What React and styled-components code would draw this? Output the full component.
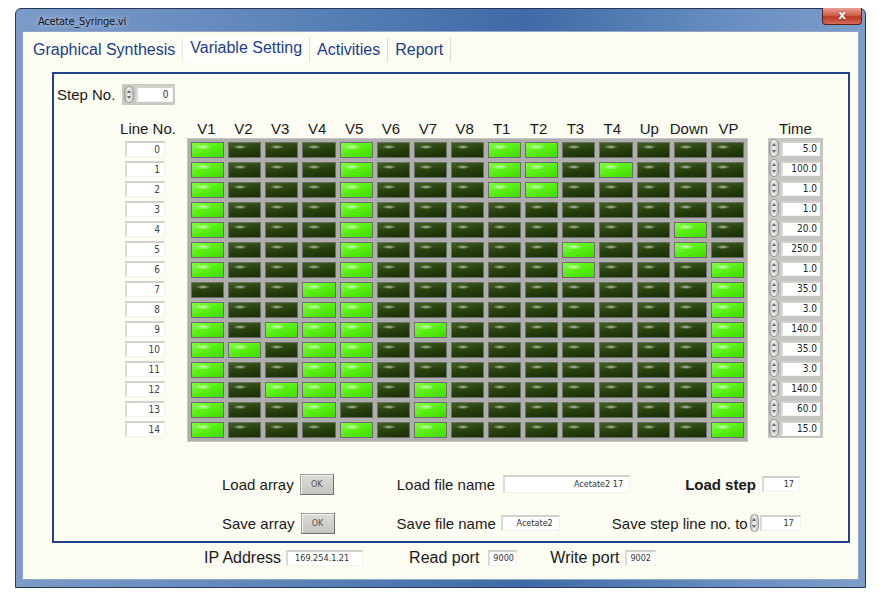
import React from "react";
import styled, { createGlobalStyle, css } from "styled-components";

const GlobalStyle = createGlobalStyle`
  html, body {
    margin: 0;
    padding: 0;
    background: #ffffff;
  }
  body {
    font-family: "Liberation Sans", Arial, sans-serif;
    color: #1a1a1a;
  }
`;

const Page = styled.div`
  width: 882px;
  height: 596px;
  padding: 8px 0 0 15px;
  box-sizing: border-box;
`;

const Window = styled.div`
  width: 851px;
  height: 580px;
  box-sizing: border-box;
  display: flex;
  flex-direction: column;
  border: 1px solid #27395a;
  border-radius: 6px 6px 0 0;
  background: linear-gradient(
    90deg,
    #7b9bc8 0%,
    #6a8dc0 20%,
    #4e78b0 45%,
    #3f6aa5 60%,
    #6a8fc2 85%,
    #7d9dc9 100%
  );
`;

const TitleBar = styled.div`
  height: 22px;
  flex: 0 0 22px;
  display: flex;
  align-items: flex-start;
  justify-content: space-between;
  padding-left: 22px;
  padding-right: 3px;
`;

const Title = styled.div`
  font-family: "DejaVu Sans", sans-serif;
  font-size: 10px;
  color: #151515;
  margin-top: 7px;
  letter-spacing: -0.3px;
  text-shadow: 0 0 6px rgba(255, 255, 255, 0.8);
`;

const CloseButton = styled.div`
  width: 40px;
  height: 17px;
  margin-top: -1px;
  box-sizing: border-box;
  border: 1px solid #5b2018;
  border-top: none;
  border-radius: 0 0 4px 4px;
  background: linear-gradient(180deg, #e7a094 0%, #d2614e 45%, #b83a26 55%, #d66a55 100%);
  color: #fff;
  font-family: "DejaVu Sans", sans-serif;
  font-weight: bold;
  font-size: 12px;
  line-height: 15px;
  text-align: center;
  text-shadow: 0 0 2px #5b1a10;
`;

const Client = styled.div`
  flex: 1;
  margin: 0 6px 7px 6px;
  background: #fcfcf2;
  border: 1px solid #8fa6c8;
  box-sizing: border-box;
  display: flex;
  flex-direction: column;
`;

const TabBar = styled.div`
  display: flex;
  height: 24px;
  margin-top: 6px;
  padding-left: 3px;
`;

const Tab = styled.div`
  padding: 0 7px;
  border-right: 1px solid #dcdcd0;
  font-size: 16px;
  color: #1d3d8f;
  line-height: 24px;
  ${(p) =>
    p.$active &&
    css`
      line-height: 20px;
      background: #fefefa;
      border-left: 1px solid #e6e6dc;
      margin-left: -1px;
    `}
`;

const Panel = styled.div`
  width: 798px;
  height: 471px;
  margin: 10px 0 0 29px;
  box-sizing: border-box;
  border: 2px solid #23408f;
  display: flex;
  flex-direction: column;
  padding-left: 3px;
`;

const StepRow = styled.div`
  display: flex;
  align-items: center;
  height: 22px;
  margin-top: 9px;
`;

const Label = styled.span`
  font-size: ${(p) => p.$size || 15}px;
  font-weight: ${(p) => (p.$bold ? "bold" : "normal")};
  color: #1a1a1a;
  white-space: nowrap;
  margin-left: ${(p) => p.$ml || 0}px;
`;

const NumControl = styled.div`
  display: flex;
  align-items: center;
  gap: 2px;
  background: #c9c9c6;
  padding: 2px;
  margin-left: ${(p) => p.$ml || 0}px;
  box-sizing: border-box;
`;

const Spin = styled.div`
  position: relative;
  width: ${(p) => p.$w || 10}px;
  height: ${(p) => p.$h || 17}px;
  margin-left: ${(p) => p.$ml || 0}px;
  box-sizing: border-box;
  border: 1px solid #9a9a98;
  border-radius: 5px;
  background: linear-gradient(90deg, #b8b8b6 0%, #f2f2f0 45%, #c4c4c2 100%);

  &::before,
  &::after {
    content: "";
    position: absolute;
    left: 50%;
    margin-left: -2px;
    border-left: 2px solid transparent;
    border-right: 2px solid transparent;
  }
  &::before {
    top: 3px;
    border-bottom: 3px solid #6a6a68;
  }
  &::after {
    bottom: 3px;
    border-top: 3px solid #6a6a68;
  }
`;

const Field = styled.div`
  width: ${(p) => p.$w}px;
  height: ${(p) => p.$h || 16}px;
  box-sizing: border-box;
  background: #ffffff;
  border-top: 2px solid #d0d0cc;
  border-left: 2px solid #dadad6;
  border-right: 1px solid #f2f2ee;
  border-bottom: 1px solid #f2f2ee;
  font-family: "DejaVu Sans Condensed", "DejaVu Sans", sans-serif;
  font-size: ${(p) => p.$fs || 9}px;
  line-height: ${(p) => (p.$h || 16) - 3}px;
  color: #333;
  text-align: ${(p) => (p.$left ? "left" : "right")};
  padding-right: ${(p) => p.$pr ?? 4}px;
  padding-left: ${(p) => p.$pl || 0}px;
  margin-left: ${(p) => p.$ml || 0}px;
  white-space: nowrap;
  overflow: hidden;
`;

const Matrix = styled.div`
  display: flex;
  margin-top: 15px;
  margin-left: 61px;
`;

const HeaderCell = styled.div`
  height: 18px;
  font-size: 15px;
  line-height: 18px;
  color: #1a1a1a;
  text-align: center;
  white-space: nowrap;
`;

const LineCol = styled.div`
  width: 60px;
  display: flex;
  flex-direction: column;
`;

const RowStack = styled.div`
  display: flex;
  flex-direction: column;
  gap: 4px;
  padding-top: 3px;
`;

const LineBox = styled(Field)`
  height: 16px;
  width: 40px;
  margin-left: 7px;
  font-size: 10px;
  line-height: 13px;
  padding-right: 4px;
  color: #444;
`;

const LedBlock = styled.div`
  width: 561px;
  margin-left: 9px;
  display: flex;
  flex-direction: column;
`;

const LedHeader = styled.div`
  display: grid;
  grid-template-columns: repeat(15, 1fr);
  column-gap: 4px;
  padding: 0 3px;
`;

const LedGrid = styled.div`
  display: grid;
  grid-template-columns: repeat(15, 1fr);
  grid-auto-rows: 16px;
  gap: 4px;
  padding: 3px;
  background: #aeaeac;
  border: 1px solid #c6c6c4;
  box-sizing: border-box;
`;

const Led = styled.div`
  border: 1px solid #6d6d6b;
  ${(p) =>
    p.$on
      ? css`
          background: radial-gradient(
              ellipse 8px 2.5px at 11px 4px,
              rgba(255, 255, 255, 0.7),
              rgba(255, 255, 255, 0) 100%
            ),
            linear-gradient(160deg, #7cff40 0%, #5af016 45%, #42da02 100%);
        `
      : css`
          background: radial-gradient(
              ellipse 7px 2px at 11px 4px,
              rgba(255, 255, 255, 0.65),
              rgba(255, 255, 255, 0) 100%
            ),
            linear-gradient(170deg, #40601f 0%, #29430f 45%, #182c05 100%);
        `}
`;

const TimeCol = styled.div`
  width: 55px;
  margin-left: 20px;
  display: flex;
  flex-direction: column;
`;

const TimeStack = styled.div`
  display: flex;
  flex-direction: column;
  background: #c5c5c2;
  padding: 1px 2px 1px 1px;
  gap: 2px;
`;

const TimeRow = styled.div`
  display: flex;
  align-items: center;
  gap: 2px;
  height: 18px;
`;

const TimeField = styled(Field)`
  width: 39px;
  height: 15px;
  font-size: 10px;
  line-height: 12px;
  padding-right: 2px;
  color: #222;
`;

const BottomArea = styled.div`
  display: flex;
  flex-direction: column;
  gap: 17px;
  margin-top: 31px;
`;

const BottomRow = styled.div`
  display: flex;
  align-items: center;
  height: 22px;
`;

const OkButton = styled.div`
  width: 34px;
  height: 21px;
  box-sizing: border-box;
  margin-left: ${(p) => p.$ml || 0}px;
  background: linear-gradient(180deg, #dcdcd8 0%, #c4c4c0 100%);
  border: 1px solid #9d9d9a;
  border-right-color: #6f6f6c;
  border-bottom-color: #6f6f6c;
  box-shadow: inset 1px 1px 0 #f4f4f2;
  font-family: "DejaVu Sans", sans-serif;
  font-size: 8px;
  line-height: 19px;
  text-align: center;
  color: #555;
`;

const StatusRow = styled.div`
  display: flex;
  align-items: center;
  height: 18px;
  margin-top: 6px;
  padding-left: 181px;
`;

const COLS = ["V1", "V2", "V3", "V4", "V5", "V6", "V7", "V8", "T1", "T2", "T3", "T4", "Up", "Down", "VP"];

const ON = [
  [0, 4, 8, 9],
  [0, 4, 8, 9, 11],
  [0, 4, 8, 9],
  [0, 4],
  [0, 4, 13],
  [0, 4, 10, 13],
  [0, 4, 10, 14],
  [3, 4, 14],
  [0, 3, 4, 14],
  [0, 2, 3, 4, 6, 14],
  [0, 1, 3, 4, 14],
  [0, 3, 4, 14],
  [0, 2, 3, 4, 6, 14],
  [0, 3, 6, 14],
  [0, 4, 6, 14],
];

const TIMES = ["5.0", "100.0", "1.0", "1.0", "20.0", "250.0", "1.0", "35.0", "3.0", "140.0", "35.0", "3.0", "140.0", "60.0", "15.0"];

const TABS = ["Graphical Synthesis", "Variable Setting", "Activities", "Report"];

export default function App() {
  return (
    <Page>
      <GlobalStyle />
      <Window>
        <TitleBar>
          <Title>Acetate_Syringe.vi</Title>
          <CloseButton>x</CloseButton>
        </TitleBar>
        <Client>
          <TabBar>
            {TABS.map((t) => (
              <Tab key={t} $active={t === "Variable Setting"}>
                {t}
              </Tab>
            ))}
          </TabBar>

          <Panel>
            <StepRow>
              <Label>Step No.</Label>
              <NumControl $ml={7}>
                <Spin $w={10} $h={17} />
                <Field $w={37} $h={16} $fs={10}>0</Field>
              </NumControl>
            </StepRow>

            <Matrix>
              <LineCol>
                <HeaderCell>Line No.</HeaderCell>
                <RowStack>
                  {ON.map((_, i) => (
                    <LineBox key={i}>{i}</LineBox>
                  ))}
                </RowStack>
              </LineCol>

              <LedBlock>
                <LedHeader>
                  {COLS.map((c) => (
                    <HeaderCell key={c}>{c}</HeaderCell>
                  ))}
                </LedHeader>
                <LedGrid>
                  {ON.map((row, r) =>
                    COLS.map((c, ci) => <Led key={r + "-" + c} $on={row.includes(ci)} />)
                  )}
                </LedGrid>
              </LedBlock>

              <TimeCol>
                <HeaderCell>Time</HeaderCell>
                <TimeStack>
                  {TIMES.map((t, i) => (
                    <TimeRow key={i}>
                      <Spin $w={10} $h={18} />
                      <TimeField>{t}</TimeField>
                    </TimeRow>
                  ))}
                </TimeStack>
              </TimeCol>
            </Matrix>

            <BottomArea>
              <BottomRow>
                <Label $ml={165}>Load array</Label>
                <OkButton $ml={6}>OK</OkButton>
                <Label $ml={63}>Load file name</Label>
                <Field $w={127} $h={18} $ml={8} $pr={6}>Acetate2 17</Field>
                <Label $ml={55} $bold>Load step</Label>
                <Field $w={38} $h={16} $ml={6} $pr={5}>17</Field>
              </BottomRow>
              <BottomRow>
                <Label $ml={165}>Save array</Label>
                <OkButton $ml={6}>OK</OkButton>
                <Label $ml={62}>Save file name</Label>
                <Field $w={59} $h={16} $ml={5} $pr={6}>Acetate2</Field>
                <Label $ml={52}>Save step line no. to</Label>
                <Spin $w={9} $h={18} $ml={2} />
                <Field $w={41} $h={16} $ml={1} $pr={6}>17</Field>
              </BottomRow>
            </BottomArea>
          </Panel>

          <StatusRow>
            <Label $size={16}>IP Address</Label>
            <Field $w={77} $h={16} $ml={5} $pr={0} $pl={7} $left>
              169.254.1.21
            </Field>
            <Label $size={16} $ml={46}>Read port</Label>
            <Field $w={29} $h={16} $ml={9} $pr={0} $pl={3} $left>
              9000
            </Field>
            <Label $size={16} $ml={33}>Write port</Label>
            <Field $w={31} $h={16} $ml={6} $pr={0} $pl={3} $left>
              9002
            </Field>
          </StatusRow>
        </Client>
      </Window>
    </Page>
  );
}
